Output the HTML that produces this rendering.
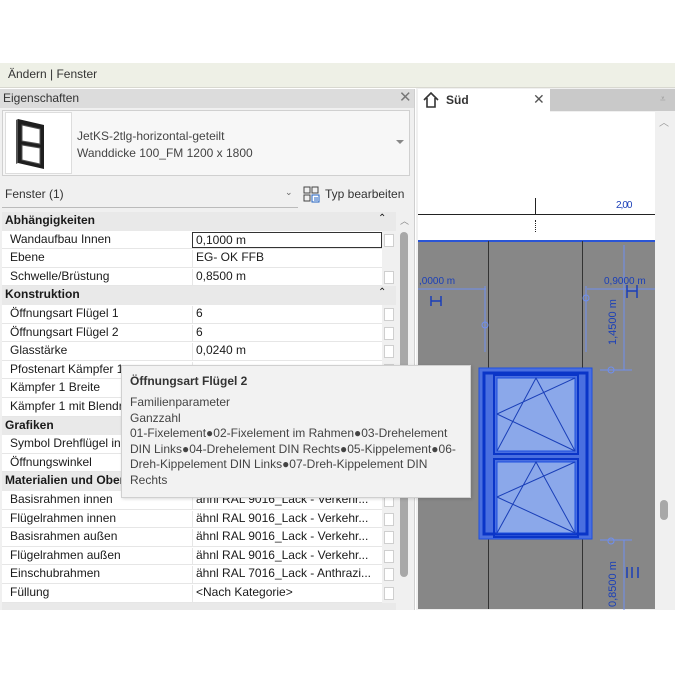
<!DOCTYPE html>
<html><head><meta charset="utf-8"><style>
*{margin:0;padding:0;box-sizing:border-box}
body{width:675px;height:675px;background:#fff;position:relative;overflow:hidden;font-family:"Segoe UI","Liberation Sans",sans-serif;font-size:12px;color:#1a1a1a}
.a{position:absolute}
.row{position:absolute;left:2px;width:380px;height:18.6px;background:#fff;border-bottom:1px solid #e6e6e6}
.row .l{position:absolute;left:8px;top:1px;white-space:nowrap}
.row .v{position:absolute;left:190px;top:1px;white-space:nowrap;width:190px;height:17px;border-left:1px solid #e6e6e6;padding-left:3px}
.row .c{position:absolute;left:382px;top:3px;width:10px;height:13px;border:1px solid #cfcfcf;background:#fff}
.hd{position:absolute;left:2px;width:394px;height:18.6px;background:#e9e9e9;font-weight:bold;padding-left:3px;padding-top:1px}
.hd .x{position:absolute;left:376px;top:1px;font-weight:normal;font-size:10px}
</style></head><body>
<div class="a" style="left:0;top:63px;width:675px;height:25px;background:#eef0e6;border-bottom:1px solid #d8d8d0"></div>
<div class="a" style="left:8px;top:67px;font-size:12px;color:#333">Ändern | Fenster</div>
<div class="a" style="left:0;top:89px;width:415px;height:521px;background:#f0f0f0;border-right:1px solid #cfcfcf"></div>
<div class="a" style="left:0;top:89px;width:414px;height:19px;background:#dcdcdc"></div>
<div class="a" style="left:3px;top:91px;color:#333">Eigenschaften</div>
<div class="a" style="left:399px;top:88px;font-size:15px;color:#777">✕</div>
<div class="a" style="left:2px;top:110px;width:408px;height:66px;background:#f7f7f7;border:1px solid #d0d0d0"></div>
<div class="a" style="left:5px;top:112px;width:67px;height:62px;background:#fff;border:1px solid #ddd"></div>
<svg class="a" style="left:14px;top:117px" width="34" height="54" viewBox="0 0 34 54"><path d="M4 2 L30 8 L30 52 L4 46 Z" fill="#1e1e1e"/><path d="M8 8 L26 12 L26 27 L8 24 Z M8 28 L26 31 L26 47 L8 43 Z" fill="#fff" stroke="#555"/><path d="M2 3 L4 2 L4 46 L2 47 Z" fill="#555"/></svg>
<div class="a" style="left:77px;top:128px;color:#444;line-height:17px">JetKS-2tlg-horizontal-geteilt<br>Wanddicke 100_FM 1200 x 1800</div>
<div class="a" style="left:396px;top:140px;width:0;height:0;border-left:4px solid transparent;border-right:4px solid transparent;border-top:4px solid #888"></div>
<div class="a" style="left:5px;top:187px;color:#333">Fenster (1)</div>
<div class="a" style="left:2px;top:207px;width:296px;height:1px;background:#bbb"></div>
<div class="a" style="left:285px;top:187px;font-size:9px;color:#666">⌄</div>
<svg class="a" style="left:303px;top:186px" width="17" height="17" viewBox="0 0 17 17"><rect x="1" y="1" width="6" height="6" fill="none" stroke="#444"/><rect x="9" y="1" width="6" height="6" fill="none" stroke="#444"/><rect x="1" y="9" width="6" height="6" fill="none" stroke="#444"/><rect x="9" y="9" width="7" height="7" fill="#fff" stroke="#2060c0"/><path d="M11 12h4M11 14h4" stroke="#2060c0"/></svg>
<div class="a" style="left:325px;top:187px;color:#333">Typ bearbeiten</div>
<div class="a" style="left:398px;top:213px;width:12px;height:396px;background:#f0f0f0"></div>
<div class="a" style="left:400px;top:214px;font-size:9px;color:#888">︿</div>
<div class="a" style="left:400px;top:232px;width:8px;height:345px;background:#a8a8a8;border-radius:4px"></div>

<div class="hd" style="top:212px">Abhängigkeiten<span class="x">⌃</span></div>
<div class="row" style="top:230.6px"><span class="l">Wandaufbau Innen</span><span class="v" style="border:1px solid #333;height:16px">0,1000 m</span><span class="c"></span></div>
<div class="row" style="top:249.2px"><span class="l">Ebene</span><span class="v">EG- OK FFB</span></div>
<div class="row" style="top:267.8px"><span class="l">Schwelle/Brüstung</span><span class="v">0,8500 m</span><span class="c"></span></div>
<div class="hd" style="top:286.4px">Konstruktion<span class="x">⌃</span></div>
<div class="row" style="top:305px"><span class="l">Öffnungsart Flügel 1</span><span class="v">6</span><span class="c"></span></div>
<div class="row" style="top:323.6px"><span class="l">Öffnungsart Flügel 2</span><span class="v">6</span><span class="c"></span></div>
<div class="row" style="top:342.2px"><span class="l">Glasstärke</span><span class="v">0,0240 m</span><span class="c"></span></div>
<div class="row" style="top:360.8px"><span class="l">Pfostenart Kämpfer 1</span><span class="v"></span><span class="c"></span></div>
<div class="row" style="top:379.4px"><span class="l">Kämpfer 1 Breite</span><span class="v"></span><span class="c"></span></div>
<div class="row" style="top:398px"><span class="l">Kämpfer 1 mit Blendrahmen</span><span class="v"></span><span class="c"></span></div>
<div class="hd" style="top:416.6px">Grafiken</div>
<div class="row" style="top:435.2px"><span class="l">Symbol Drehflügel innen</span><span class="v"></span><span class="c"></span></div>
<div class="row" style="top:453.8px"><span class="l">Öffnungswinkel</span><span class="v"></span><span class="c"></span></div>
<div class="hd" style="top:472.4px">Materialien und Oberflächen</div>
<div class="row" style="top:491px"><span class="l">Basisrahmen innen</span><span class="v">ähnl RAL 9016_Lack - Verkehr...</span><span class="c"></span></div>
<div class="row" style="top:509.6px"><span class="l">Flügelrahmen innen</span><span class="v">ähnl RAL 9016_Lack - Verkehr...</span><span class="c"></span></div>
<div class="row" style="top:528.2px"><span class="l">Basisrahmen außen</span><span class="v">ähnl RAL 9016_Lack - Verkehr...</span><span class="c"></span></div>
<div class="row" style="top:546.8px"><span class="l">Flügelrahmen außen</span><span class="v">ähnl RAL 9016_Lack - Verkehr...</span><span class="c"></span></div>
<div class="row" style="top:565.4px"><span class="l">Einschubrahmen</span><span class="v">ähnl RAL 7016_Lack - Anthrazi...</span><span class="c"></span></div>
<div class="row" style="top:584px"><span class="l">Füllung</span><span class="v">&lt;Nach Kategorie&gt;</span><span class="c"></span></div>
<div class="hd" style="top:602.6px;height:7px;overflow:hidden"></div>
<div class="a" style="left:0;top:610px;width:675px;height:65px;background:#fff"></div>

<div class="a" style="left:416px;top:88px;width:259px;height:522px;background:#f0f0f0"></div>
<div class="a" style="left:550px;top:89px;width:125px;height:22px;background:#c9c9c9"></div>
<div class="a" style="left:418px;top:89px;width:132px;height:23px;background:#fff"></div>
<svg class="a" style="left:423px;top:92px" width="16" height="16" viewBox="0 0 16 16"><path d="M1 8 L8 1 L15 8 M4 6 V15 H12 V6" fill="none" stroke="#333" stroke-width="1.6"/></svg>
<div class="a" style="left:446px;top:93px;font-weight:bold;color:#333">Süd</div>
<div class="a" style="left:533px;top:91px;font-size:14px;color:#555">✕</div>
<div class="a" style="left:660px;top:94px;font-size:10px;color:#999">⩡</div>
<div class="a" style="left:418px;top:112px;width:237px;height:128px;background:#fff"></div>
<div class="a" style="left:659px;top:114px;font-size:10px;color:#999">︿</div>
<div class="a" style="left:660px;top:500px;width:8px;height:20px;background:#a8a8a8;border-radius:4px"></div>
<div class="a" style="left:418px;top:214px;width:237px;height:1px;background:#222"></div>
<div class="a" style="left:535px;top:198px;width:1px;height:17px;background:#222"></div>
<div class="a" style="left:535px;top:220px;width:1px;height:12px;border-left:1px dotted #222"></div>
<div class="a" style="left:616px;top:200px;font-size:10px;color:#1a3fb8;letter-spacing:-1px">2,00</div>
<div class="a" style="left:418px;top:240px;width:237px;height:369px;background:#878787;border-top:2px solid #2a55d6"></div>
<div class="a" style="left:488px;top:241px;width:1px;height:368px;background:#333"></div>
<div class="a" style="left:582px;top:241px;width:1px;height:368px;background:#333"></div>
<svg class="a" style="left:418px;top:240px" width="237" height="370" viewBox="418 240 237 370">
<g stroke="#6f8ff0" stroke-width="1" fill="none">
<path d="M418 289 H486 M485 286 V352 M587 289 H655 M586 286 V352 M624 245 V370 M624 540 V610 M600 370 H632 M600 540 H632"/>
<circle cx="485" cy="325" r="3"/><circle cx="586" cy="298" r="3"/><circle cx="611" cy="370" r="3"/><circle cx="611" cy="541" r="3"/>
</g>
<g stroke="#1a3fb8" stroke-width="1.5"><path d="M431 296 V306 M441 296 V306 M431 301 H441 M627 285 V298 M637 285 V298 M627 291 H637 M627 567 V578 M638 567 V578 M632 567 V578"/></g>
<text x="419" y="284" font-size="10" fill="#1a3fb8" font-family="Liberation Sans">,0000 m</text>
<text x="604" y="284" font-size="10" fill="#1a3fb8" font-family="Liberation Sans">0,9000 m</text>
<text transform="translate(616,345) rotate(-90)" font-size="11" fill="#1a3fb8" font-family="Liberation Sans">1,4500 m</text>
<text transform="translate(616,607) rotate(-90)" font-size="11" fill="#1a3fb8" font-family="Liberation Sans">0,8500 m</text>
<rect x="479" y="368" width="113" height="171" fill="#4a6fe0" stroke="#1e4fe0"/>
<rect x="484" y="373" width="103" height="161" fill="none" stroke="#0a35c8" stroke-width="3"/>
<rect x="494" y="375" width="84" height="79" fill="none" stroke="#0a35c8" stroke-width="2"/>
<rect x="494" y="459" width="84" height="78" fill="none" stroke="#0a35c8" stroke-width="2"/>
<rect x="497" y="378" width="78" height="73" fill="#8ba8ea" stroke="#1e4fe0"/>
<rect x="497" y="462" width="78" height="71" fill="#8ba8ea" stroke="#1e4fe0"/>
<path d="M497 451 L536 378 L575 451 M497 414 L575 378 M497 414 L575 451 M497 533 L536 462 L575 533 M497 497 L575 462 M497 497 L575 533" stroke="#1a3fb8" fill="none"/>
</svg>

<div class="a" style="left:121px;top:365px;width:350px;height:133px;background:#f2f2f2;border:1px solid #d0d0d0;box-shadow:1px 1px 3px rgba(0,0,0,.15)"></div>
<div class="a" style="left:130px;top:374px;font-weight:bold;color:#333">Öffnungsart Flügel 2</div>
<div class="a" style="left:130px;top:395px;color:#444;line-height:15.5px;width:338px">Familienparameter<br>Ganzzahl<br>01-Fixelement●02-Fixelement im Rahmen●03-Drehelement<br>DIN Links●04-Drehelement DIN Rechts●05-Kippelement●06-<br>Dreh-Kippelement DIN Links●07-Dreh-Kippelement DIN<br>Rechts</div>
</body></html>
